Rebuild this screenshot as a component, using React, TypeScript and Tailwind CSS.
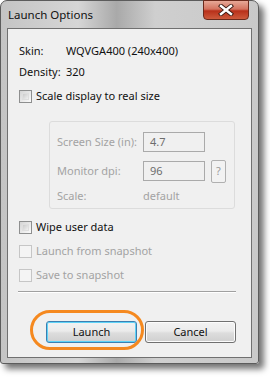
import React from "react";

const font = { fontFamily: '"Noto Sans", "Open Sans", sans-serif' };

function Check({ label, disabled }: { label: string; disabled?: boolean }) {
  return (
    <div className="flex h-[20px] items-center">
      <div
        className={
          disabled
            ? "h-[13px] w-[13px] border border-[#c6c6c6] bg-[#f4f4f4]"
            : "h-[13px] w-[13px] border border-[#8e8f8f] bg-gradient-to-br from-[#d4d4d4] to-[#fbfbfb] p-[2px]"
        }
      >
        {!disabled && <div className="h-full w-full border border-[#dedede] bg-gradient-to-br from-[#cbcbcb] to-[#f0f0f0]" />}
      </div>
      <span className={"ml-[4px] whitespace-nowrap text-[11px] " + (disabled ? "text-[#a3a3a3]" : "text-[#111]")}>{label}</span>
    </div>
  );
}

export default function App() {
  return (
    <div className="h-[381px] w-[270px] overflow-hidden bg-white" style={font}>
      <div className="relative h-[364px] w-[259px] rounded-t-[7px] rounded-b-[3px] border border-[#5c5c5c] bg-[linear-gradient(90deg,#c4c4c4_0%,#d6d6d6_30%,#a9a9a9_45%,#cfcfcf_60%,#c9c9c9_100%)] shadow-[5px_5px_6px_rgba(0,0,0,0.55)]">
        <div className="relative flex h-[27px] items-center pl-[7px]">
          <span className="text-[11.5px] text-[#111]">Launch Options</span>
          <div className="absolute right-[9px] top-[-1px] flex h-[20px] w-[46px] items-center justify-center rounded-b-[4px] border border-[#6b2a1c] bg-[linear-gradient(180deg,#e7a897_0%,#d4735f_45%,#b8301a_55%,#cd5a3c_100%)]">
            <svg width="16" height="12" viewBox="0 0 16 12">
              <path d="M3 2 L13 10 M13 2 L3 10" stroke="#3a1a12" strokeWidth="4.2" strokeLinecap="square" />
              <path d="M3 2 L13 10 M13 2 L3 10" stroke="#ffffff" strokeWidth="2.4" strokeLinecap="square" />
            </svg>
          </div>
        </div>
        <div className="mx-[6px] h-[330px] border border-[#707070] bg-[#f0f0f0]">
          <div className="flex flex-col pl-[11px] pt-[12px]">
            <div className="flex h-[20px] items-center whitespace-nowrap text-[11px] text-[#111]">
              <span className="w-[47px]">Skin:</span>
              <span>WQVGA400 (240x400)</span>
            </div>
            <div className="mt-[1px] flex h-[20px] items-center whitespace-nowrap text-[11px] text-[#111]">
              <span className="w-[47px]">Density:</span>
              <span>320</span>
            </div>
            <div className="mt-[4px]">
              <Check label="Scale display to real size" />
            </div>
            <div className="ml-[30px] mt-[15px] h-[88px] w-[186px] whitespace-nowrap rounded-[3px] border border-[#dcdcdc] pl-[7px] text-[11px] text-[#a3a3a3]">
              <div className="mt-[10px] flex h-[20px] items-center">
                <span className="w-[86px]">Screen Size (in):</span>
                <div className="flex h-[20px] w-[62px] items-center border border-[#aaaaaa] bg-[#f0f0f0] pl-[6px] text-[#6d6d6d]">4.7</div>
              </div>
              <div className="mt-[9px] flex h-[20px] items-center">
                <span className="w-[86px]">Monitor dpi:</span>
                <div className="flex h-[20px] w-[62px] items-center border border-[#aaaaaa] bg-[#f0f0f0] pl-[6px] text-[#6d6d6d]">96</div>
                <div className="ml-[6px] flex h-[23px] w-[15px] items-center justify-center rounded-[2px] border border-[#b0b0b0] bg-[#f2f2f2] text-[#9a9a9a]">?</div>
              </div>
              <div className="mt-[5px] flex h-[20px] items-center">
                <span className="w-[86px]">Scale:</span>
                <span>default</span>
              </div>
            </div>
            <div className="mt-[8px]">
              <Check label="Wipe user data" />
            </div>
            <div className="mt-[4px]">
              <Check label="Launch from snapshot" disabled />
            </div>
            <div className="mt-[4px]">
              <Check label="Save to snapshot" disabled />
            </div>
            <div className="ml-[-1px] mt-[6px] h-[2px] w-[218px] border-t border-b border-t-[#a0a0a0] border-b-white" />
            <div className="relative ml-[27px] mt-[28px] flex gap-[8px]">
              <div className="flex h-[22px] w-[91px] items-center justify-center rounded-[3px] border border-[#3c7fb1] bg-[linear-gradient(180deg,#f2f2f2_0%,#ebebeb_45%,#dddddd_55%,#cfcfcf_100%)] shadow-[inset_0_0_0_1px_#5fd3f7] text-[11px] text-[#111]">
                Launch
              </div>
              <div className="flex h-[22px] w-[91px] items-center justify-center rounded-[3px] border border-[#707070] bg-[linear-gradient(180deg,#f2f2f2_0%,#ebebeb_45%,#dddddd_55%,#cfcfcf_100%)] shadow-[inset_0_0_0_1px_#fcfcfc] text-[11px] text-[#111]">
                Cancel
              </div>
              <div className="pointer-events-none absolute left-[-16px] top-[-11px] h-[40px] w-[114px] rounded-[20px] border-[3px] border-[#f5891f]" />
            </div>
          </div>
        </div>
      </div>
    </div>
  );
}
